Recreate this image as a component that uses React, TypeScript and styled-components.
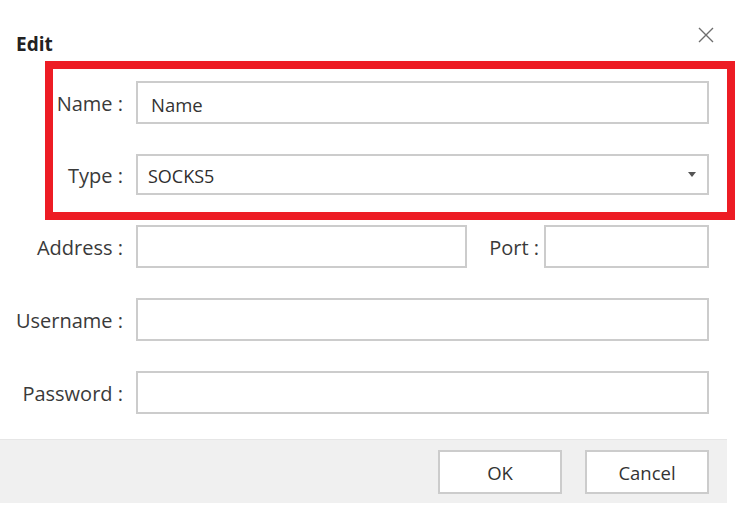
import * as React from "react"
import styled, { createGlobalStyle } from "styled-components"

const GlobalStyle = createGlobalStyle`
  html, body {
    margin: 0;
    padding: 0;
    background: #ffffff;
  }
  body {
    font-family: "Open Sans", "Noto Sans", "Liberation Sans", sans-serif;
    color: #3a3a3a;
  }
  * {
    box-sizing: border-box;
  }
`

const App = () => (
  <>
    <GlobalStyle />
    <Dialog>
      <Header>
        <Title>Edit</Title>
        <CloseButton aria-label="Close">
          <svg width="16" height="16" viewBox="0 0 16 16">
            <path d="M1 1 L15 15 M15 1 L1 15" stroke="#6e6e6e" strokeWidth="1.4" fill="none" />
          </svg>
        </CloseButton>
      </Header>
      <Form>
        <Label>Name :</Label>
        <TextInput defaultValue="Name" $pad={13} />

        <Label>Type :</Label>
        <SelectBox>
          <span>SOCKS5</span>
          <svg width="8" height="5" viewBox="0 0 8 5">
            <path d="M0 0 L8 0 L4 5 Z" fill="#555555" />
          </svg>
        </SelectBox>

        <Label>Address :</Label>
        <AddressRow>
          <TextInput $width={331} />
          <PortLabel>Port :</PortLabel>
          <TextInput $width={165} />
        </AddressRow>

        <Label>Username :</Label>
        <TextInput />

        <Label>Password :</Label>
        <TextInput type="password" />
      </Form>
      <Footer>
        <Button>OK</Button>
        <Button>Cancel</Button>
      </Footer>
      <Highlight />
    </Dialog>
  </>
)

export default App

const Dialog = styled.div`
  position: relative;
  width: 727px;
  background: #ffffff;
`

const Header = styled.div`
  display: flex;
  justify-content: space-between;
  align-items: flex-start;
  height: 81px;
  padding: 27px 13px 0 16px;
`

const Title = styled.h2`
  margin: 4px 0 0;
  font-size: 19px;
  line-height: 26px;
  font-weight: 700;
  color: #222222;
`

const CloseButton = styled.div`
  width: 16px;
  height: 16px;
  display: flex;
  cursor: pointer;
`

const Form = styled.div`
  display: grid;
  grid-template-columns: 123px 1fr;
  column-gap: 13px;
  row-gap: 30px;
  padding: 0 18px 25px 0;
`

const Label = styled.label`
  display: flex;
  align-items: center;
  justify-content: flex-end;
  padding-top: 3px;
  font-size: 20px;
  line-height: 26px;
  color: #3a3a3a;
  white-space: nowrap;
`

const TextInput = styled.input<{ $width?: number; $pad?: number }>`
  width: ${(p) => (p.$width ? `${p.$width}px` : "100%")};
  height: 43px;
  padding: 3px ${(p) => p.$pad ?? 12}px 0;
  border: 2px solid #cccccc;
  border-radius: 0;
  background: #ffffff;
  font-family: inherit;
  font-size: 18.5px;
  color: #333333;
  outline: none;
`

const SelectBox = styled.div`
  display: flex;
  align-items: center;
  justify-content: space-between;
  height: 41px;
  padding: 3px 11px 0 10px;
  border: 2px solid #cccccc;
  font-size: 18px;
  color: #2e2e2e;
  cursor: pointer;

  svg {
    margin-top: -3px;
  }
`

const AddressRow = styled.div`
  display: flex;
  align-items: center;
`

const PortLabel = styled.label`
  margin-left: auto;
  margin-right: 5px;
  padding-top: 3px;
  font-size: 20px;
  line-height: 26px;
  color: #3a3a3a;
`

const Footer = styled.div`
  display: flex;
  justify-content: flex-end;
  align-items: center;
  gap: 23px;
  height: 64px;
  padding: 0 18px 0 0;
  background: #f0f0f0;
  border-top: 1px solid #e6e6e6;
`

const Button = styled.button`
  width: 124px;
  height: 44px;
  padding: 2px 0 0;
  border: 2px solid #cccccc;
  background: #ffffff;
  font-family: inherit;
  font-size: 18.5px;
  color: #333333;
  cursor: pointer;
`

const Highlight = styled.div`
  position: absolute;
  left: 45px;
  top: 61px;
  width: 690px;
  height: 159px;
  border: 8px solid #ed1c24;
  pointer-events: none;
`
